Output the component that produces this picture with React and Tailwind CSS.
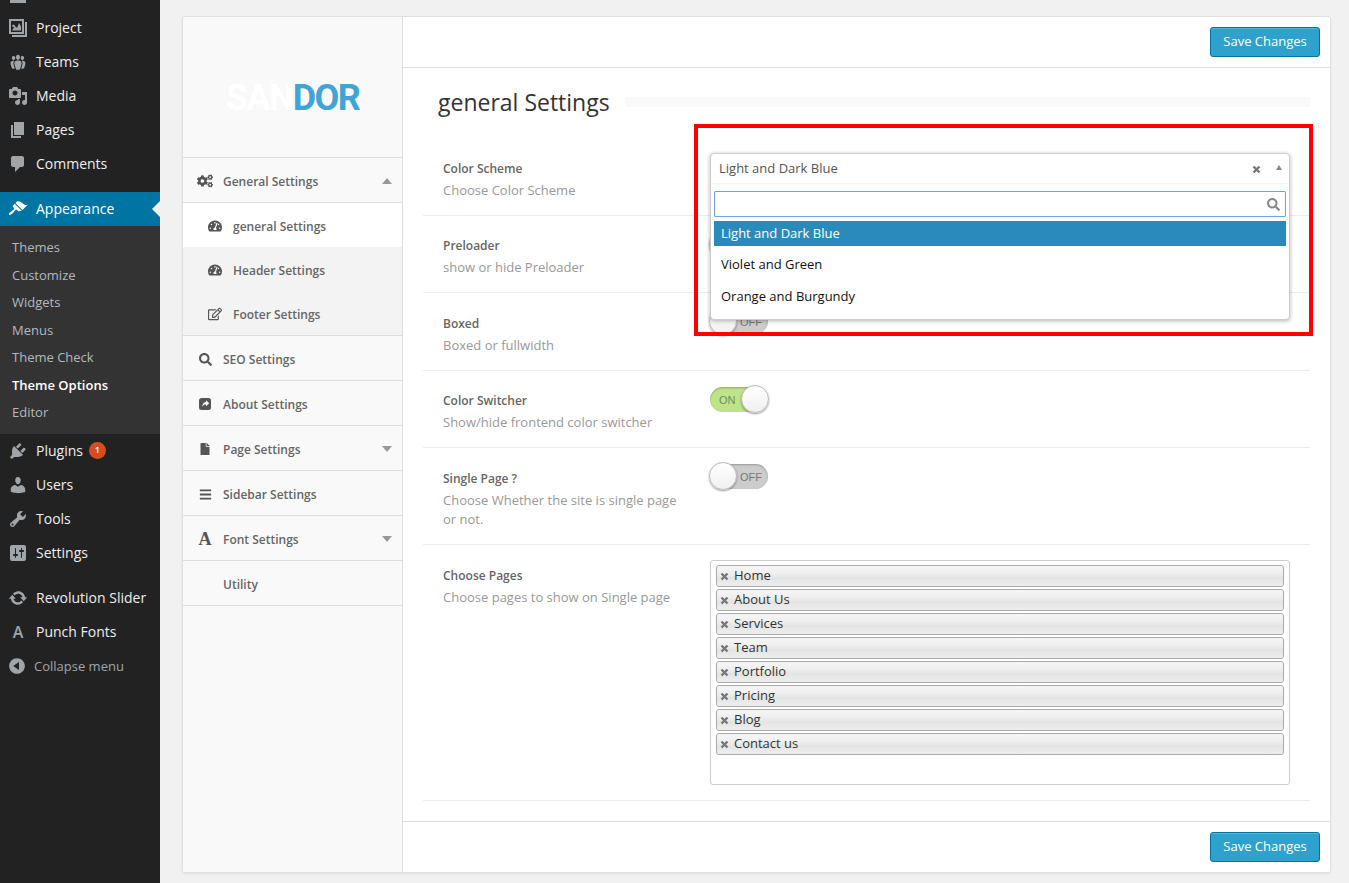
import React from 'react';
import { FaCogs, FaTachometerAlt, FaRegEdit, FaSearch, FaFile, FaBars } from 'react-icons/fa';

const D = {
  project: 'M1 1h15v15H1zM3 3v11h11V3zM4 12.500l3-4.500 2 2 2-5 2 3.500v4zM5.500 6.500a1.300 1.300 0 1 0 .01 0zM17 4h2v15H4v-2h13z',
  teams: 'M8.03 4.46c-.29 1.28.55 3.46 1.97 3.46 1.41 0 2.25-2.18 1.96-3.46-.22-.98-1.08-1.63-1.96-1.63-.89 0-1.74.65-1.97 1.63zm-4.13.9c-.25 1.08.47 2.93 1.67 2.93s1.92-1.85 1.67-2.93c-.19-.83-.92-1.39-1.67-1.39s-1.48.56-1.67 1.39zm8.86 0c-.25 1.08.47 2.93 1.66 2.93 1.2 0 1.92-1.85 1.67-2.93-.19-.83-.92-1.39-1.67-1.39-.74 0-1.47.56-1.66 1.39zm-.59 11.43l1.25-4.3C14.2 10 12.71 8.47 10 8.47c-2.72 0-4.21 1.53-3.44 4.02l1.26 4.3C8.05 17.51 9 18 10 18c.98 0 1.94-.49 2.17-1.21zm-6.1-7.63c-.49.67-.96 1.83-.42 3.59l1.12 3.79c-.34.2-.77.31-1.2.31-.85 0-1.65-.41-1.85-1.03l-1.07-3.65c-.65-2.11.61-3.4 2.92-3.4.27 0 .54.02.79.06-.1.1-.2.22-.29.33zm8.35-.39c2.31 0 3.58 1.29 2.92 3.4l-1.07 3.65c-.2.62-1 1.03-1.85 1.03-.43 0-.86-.11-1.2-.31l1.11-3.77c.55-1.78.08-2.94-.42-3.61-.08-.11-.18-.23-.28-.33.25-.04.51-.06.79-.06z',
  media: 'M13 11V4c0-.55-.45-1-1-1h-1.67L9 1H5L3.67 3H2c-.55 0-1 .45-1 1v7c0 .55.45 1 1 1h10c.55 0 1-.45 1-1zM7 4.500c1.380 0 2.500 1.120 2.500 2.500S8.380 9.500 7 9.500 4.500 8.380 4.500 7 5.620 4.500 7 4.500zM14 6h5v10.500c0 1.380-1.120 2.500-2.500 2.500S14 17.880 14 16.500s1.120-2.500 2.500-2.500c.17 0 .34.02.5.05V9h-3V6zm-4 8.050V13h2v3.500c0 1.380-1.120 2.500-2.500 2.500S7 17.880 7 16.500 8.120 14 9.500 14c.17 0 .34.02.5.05z',
  pages: 'M6 15V2h10v13H6zm-1 1h8v2H3V5h2v11z',
  comments: 'M5 2h9c1.100 0 2 .9 2 2v7c0 1.100-.9 2-2 2h-2l-5 5v-5H5c-1.100 0-2-.9-2-2V4c0-1.100.9-2 2-2z',
  appearance: 'M14.480 11.060L7.410 3.990l1.500-1.500c.5-.56 2.300-.47 3.510.32 1.210.8 1.430 1.280 2.910 2.100 1.180.64 2.450 1.260 4.450.85zm-.71.71L6.700 4.700 4.930 6.470c-.39.39-.39 1.020 0 1.410l1.060 1.060c.39.39.39 1.030 0 1.420-.6.6-1.430 1.110-2.210 1.690-.35.26-.7.53-1.010.84C1.430 13.230.4 14.890 1.200 15.680c.79.8 2.450-.23 3.790-1.570.31-.31.58-.66.84-1.010.58-.78 1.090-1.610 1.690-2.210.39-.39 1.030-.39 1.420 0l1.060 1.060c.39.39 1.020.39 1.410 0z',
  plugins: 'M13.110 4.360L9.870 7.600 8 5.730l3.240-3.240c.35-.34 1.050-.2 1.560.32.52.51.66 1.210.31 1.550zm-8 1.770l.91-1.120 9.010 9.010-1.190.84c-.71.71-2.630 1.160-3.820 1.160H6.140L4.900 17.260c-.59.59-1.540.59-2.120 0-.59-.58-.59-1.530 0-2.120l1.240-1.240v-3.880c0-1.130.4-3.190 1.090-3.890zm7.260 3.970l3.240-3.240c.34-.35 1.040-.21 1.550.31.52.51.66 1.210.31 1.550l-3.240 3.250z',
  users: 'M10 9.250c-2.270 0-2.730-3.440-2.730-3.440C7 4.020 7.820 2 9.970 2c2.160 0 2.980 2.020 2.710 3.810 0 0-.41 3.440-2.680 3.440zm0 2.570L12.720 10c2.390 0 4.520 2.330 4.520 4.530v2.490s-3.650 1.130-7.240 1.130c-3.650 0-7.240-1.130-7.240-1.130v-2.490c0-2.250 1.940-4.480 4.470-4.480z',
  tools: 'M16.680 9.770c-1.340 1.340-3.300 1.670-4.950.99l-5.410 6.520c-.99.99-2.590.99-3.580 0s-.99-2.590 0-3.570l6.520-5.420c-.68-1.650-.35-3.610.99-4.950 1.280-1.280 3.120-1.620 4.720-1.060l-2.890 2.890 2.820 2.820 2.860-2.870c.53 1.580.18 3.390-1.080 4.650zM3.810 16.210c.4.39 1.040.39 1.430 0 .4-.4.4-1.040 0-1.430-.39-.4-1.030-.4-1.430 0-.39.39-.39 1.030 0 1.430z',
  settings: 'M18 16V4c0-1.100-.9-2-2-2H4c-1.100 0-2 .9-2 2v12c0 1.100.9 2 2 2h12c1.100 0 2-.9 2-2zM8 11h1c.55 0 1 .45 1 1s-.45 1-1 1H8v1.500c0 .28-.22.5-.5.5s-.5-.22-.5-.5V13H6c-.55 0-1-.45-1-1s.45-1 1-1h1V5.500c0-.28.22-.5.5-.5s.5.22.5.5V11zm5-2h-1c-.55 0-1-.45-1-1s.45-1 1-1h1V5.500c0-.28.22-.5.5-.5s.5.22.5.5V7h1c.55 0 1 .45 1 1s-.45 1-1 1h-1v5.500c0 .28-.22.5-.5.5s-.5-.22-.5-.5V9z',
  update: 'M10.200 3.280c3.530 0 6.430 2.610 6.920 6h2.080l-3.500 4-3.500-4h2.320c-.45-1.970-2.210-3.450-4.320-3.450-1.450 0-2.730.71-3.540 1.780L4.950 5.660C6.230 4.200 8.110 3.280 10.200 3.280zm-.4 13.440c-3.520 0-6.430-2.610-6.920-6H.8l3.500-4c1.170 1.330 2.330 2.670 3.500 4H5.480c.45 1.970 2.210 3.450 4.320 3.450 1.450 0 2.730-.71 3.540-1.780l1.710 1.950c-1.280 1.460-3.150 2.380-5.250 2.380z',
  collapse: 'M10 2.160c4.330 0 7.840 3.510 7.840 7.840s-3.510 7.840-7.840 7.840S2.160 14.330 2.160 10 5.710 2.160 10 2.160zm2 11.720V6.120L6.180 9.970z',
};

function Dash({ d, className = 'text-[#a0a5aa]' }) {
  return (
    <svg viewBox="0 0 20 20" width="20" height="20" fill="currentColor" fillRule="evenodd" className={className}>
      <path d={d} />
    </svg>
  );
}

function XMark({ className = '' }) {
  return (
    <svg viewBox="0 0 9 9" width="9" height="9" className={className}>
      <path d="M1.500 1.500l6 6M7.500 1.500l-6 6" stroke="#777777" strokeWidth="2.400" fill="none" />
    </svg>
  );
}

function ShareIcon() {
  return (
    <svg viewBox="0 0 14 14" width="14" height="14">
      <rect x="1" y="1" width="12" height="12" rx="2.500" fill="#555555" />
      <path d="M8 3.200l3.200 3-3.200 3V7.500c-1.800 0-3 .6-3.800 2.300.1-2.700 1.400-4.600 3.800-4.800z" fill="#ffffff" />
    </svg>
  );
}

function MenuRow({ icon, children }) {
  return (
    <div className="flex h-[34px] items-center text-[14px] text-[#eeeeee]">
      <div className="flex w-9 justify-center">{icon}</div>
      <div className="flex items-center pb-[2px]">{children}</div>
    </div>
  );
}

const subs = ['Themes', 'Customize', 'Widgets', 'Menus', 'Theme Check', 'Theme Options', 'Editor'];

function WpSidebar() {
  return (
    <aside className="flex w-[160px] shrink-0 flex-col bg-[#222222]">
      <div className="h-[11px]">
        <div className="ml-[10px] h-[3px] w-[16px] bg-[#a0a5aa]" />
      </div>
      <MenuRow icon={<Dash d={D.project} />}>Project</MenuRow>
      <MenuRow icon={<Dash d={D.teams} />}>Teams</MenuRow>
      <MenuRow icon={<Dash d={D.media} />}>Media</MenuRow>
      <MenuRow icon={<Dash d={D.pages} />}>Pages</MenuRow>
      <MenuRow icon={<Dash d={D.comments} />}>Comments</MenuRow>
      <div className="relative mt-[11px] flex h-[34px] items-center bg-[#0074a2] text-[14px] text-white">
        <div className="flex w-9 justify-center"><Dash d={D.appearance} className="text-white" /></div>
        <div className="pb-[2px]">Appearance</div>
        <div className="absolute right-0 top-[9px] h-0 w-0 border-y-[8px] border-r-[8px] border-y-transparent border-r-[#f1f1f1]" />
      </div>
      <div className="h-[208px] bg-[#333333] pt-[8px] pl-3 text-[13px] text-[#b4b9be]">
        {subs.map((s) => (
          <div key={s} className={`flex h-[27.5px] items-center ${s === 'Theme Options' ? 'font-semibold text-white' : ''}`}>{s}</div>
        ))}
      </div>
      <MenuRow icon={<Dash d={D.plugins} />}>
        Plugins
        <span className="ml-[6px] flex h-[17px] w-[17px] items-center justify-center rounded-full bg-[#d54e21] text-[9px] font-semibold text-white">1</span>
      </MenuRow>
      <MenuRow icon={<Dash d={D.users} />}>Users</MenuRow>
      <MenuRow icon={<Dash d={D.tools} />}>Tools</MenuRow>
      <MenuRow icon={<Dash d={D.settings} />}>Settings</MenuRow>
      <div className="h-[11px]" />
      <MenuRow icon={<Dash d={D.update} />}>Revolution Slider</MenuRow>
      <MenuRow icon={<span className="text-[16px] font-semibold text-[#a0a5aa]">A</span>}>Punch Fonts</MenuRow>
      <div className="flex h-[34px] items-center text-[13px] text-[#a0a5aa]">
        <div className="flex w-[34px] justify-center"><Dash d={D.collapse} className="text-[#a0a5aa]" /></div>
        <div className="pt-[2px]">Collapse menu</div>
      </div>
    </aside>
  );
}

function NavRow({ icon, label, arrow, className = 'bg-[#f9f9f9] border-b border-[#dddddd] h-[45px]', sub }) {
  return (
    <div className={`flex items-center pt-[2px] text-[12px] font-semibold text-[#666666] ${className}`}>
      <div className={`flex items-center justify-center text-[#555555] ${sub ? 'ml-[24px] w-[16px]' : 'ml-[14px] w-[16px]'}`}>{icon}</div>
      <span className={`pt-[2px] ${sub ? 'ml-[10px]' : 'ml-[10px]'}`}>{label}</span>
      {arrow === 'up' && <div className="ml-auto mr-[10px] h-0 w-0 border-x-[5px] border-b-[6px] border-x-transparent border-b-[#999999]" />}
      {arrow === 'down' && <div className="ml-auto mr-[10px] h-0 w-0 border-x-[5px] border-t-[6px] border-x-transparent border-t-[#999999]" />}
    </div>
  );
}

function OptionNav() {
  return (
    <nav className="flex w-[220px] shrink-0 flex-col border-r border-[#dddddd] bg-[#f9f9f9]">
      <div className="flex h-[141px] items-start justify-center border-b border-[#dddddd] pt-[60px]">
        <div className="font-['Roboto',sans-serif] text-[36px] leading-[42px] font-bold tracking-[-1.600px]">
          <span className="text-white">SAN</span><span className="text-[#42a4d6]">DOR</span>
        </div>
      </div>
      <NavRow icon={<FaCogs size={16} />} label="General Settings" arrow="up" />
      <NavRow sub icon={<FaTachometerAlt size={14} />} label="general Settings" className="h-[44px] bg-white" />
      <NavRow sub icon={<FaTachometerAlt size={14} />} label="Header Settings" className="h-[44px] bg-[#f3f3f3]" />
      <NavRow sub icon={<FaRegEdit size={14} />} label="Footer Settings" className="h-[45px] border-b border-[#dddddd] bg-[#f3f3f3]" />
      <NavRow icon={<FaSearch size={13} />} label="SEO Settings" />
      <NavRow icon={<ShareIcon />} label="About Settings" />
      <NavRow icon={<FaFile size={12} />} label="Page Settings" arrow="down" />
      <NavRow icon={<FaBars size={13} />} label="Sidebar Settings" />
      <NavRow icon={<span className="font-['Liberation_Serif',serif] text-[18px] leading-[18px] font-bold">A</span>} label="Font Settings" arrow="down" />
      <NavRow icon={null} label="Utility" />
    </nav>
  );
}

function SaveButton() {
  return (
    <button className="h-[30px] w-[110px] rounded-[3px] border border-[#0074a2] bg-[#2ea2cc] text-[13px] text-white shadow-[inset_0_1px_0_rgba(120,200,230,0.5)]">
      Save Changes
    </button>
  );
}

function Toggle({ on }) {
  return (
    <div className={`relative h-[25px] w-[58px] rounded-full font-['Liberation_Sans',sans-serif] text-[11px] shadow-[inset_0_1px_2px_rgba(0,0,0,0.25)] ${on ? 'bg-[#bfe38a] text-[#6b8f5a]' : 'bg-[#cccccc] text-[#777777]'}`}>
      <span className={`absolute top-[5px] ${on ? 'left-[9px]' : 'left-[30px]'}`}>{on ? 'ON' : 'OFF'}</span>
      <div className={`absolute top-[-2px] h-[28px] w-[28px] rounded-full border border-[#bbbbbb] bg-gradient-to-b from-white to-[#f0f0f0] shadow-[0_1px_2px_rgba(0,0,0,0.4)] ${on ? 'left-[31px]' : 'left-[-1px]'}`} />
    </div>
  );
}

function Row({ label, desc, height, labelTop = 'pt-[20px]', children }) {
  return (
    <div className={`flex border-b border-[#eeeeee] ${height}`}>
      <div className="w-[287px] shrink-0 pl-[20px]">
        <div className={`${labelTop} text-[12px] leading-[20px] font-semibold text-[#666666]`}>{label}</div>
        <div className="mt-[2px] w-[240px] text-[13px] leading-[19px] text-[#999999]">{desc}</div>
      </div>
      <div className="pt-[16px]">{children}</div>
    </div>
  );
}

const pages = ['Home', 'About Us', 'Services', 'Team', 'Portfolio', 'Pricing', 'Blog', 'Contact us'];

function Tag({ label }) {
  return (
    <div className="flex h-[22px] items-center rounded-[3px] border border-[#aaaaaa] bg-[linear-gradient(#f4f4f4_10%,#eeeeee_40%,#e4e4e4_60%,#eeeeee_100%)] pl-[3px] text-[13px] text-[#333333]">
      <XMark />
      <span className="ml-[5px]">{label}</span>
    </div>
  );
}

function Dropdown() {
  return (
    <div className="absolute left-[307px] top-[136px] h-[167px] w-[580px] rounded-[4px] border border-[#cccccc] bg-white shadow-[0_1px_4px_rgba(0,0,0,0.3)]">
      <div className="flex h-[30px] items-center border-b border-[#f4f4f4] pl-2 text-[13px] text-[#555555]">
        Light and Dark Blue
        <XMark className="absolute left-[541px] top-[11px]" />
        <div className="absolute left-[565px] top-[11px] h-0 w-0 border-x-[3.500px] border-b-[5px] border-x-transparent border-b-[#888888]" />
      </div>
      <div className="relative mx-[3px] mt-[7px] h-[26px] rounded-[1px] border border-[#6aa7d9] bg-white">
        <FaSearch size={13} className="absolute right-[5px] top-[6px] text-[#888888]" />
      </div>
      <div className="mx-[3px] mt-[4px] text-[13px] text-[#111111]">
        <div className="flex h-[25px] items-center bg-[#2a8bba] pl-[7px] text-white">Light and Dark Blue</div>
        <div className="flex h-[32px] items-center pl-[7px] pt-[5px]">Violet and Green</div>
        <div className="flex h-[31px] items-center pl-[7px] pt-[7px]">Orange and Burgundy</div>
      </div>
    </div>
  );
}

function Content() {
  return (
    <div className="relative flex min-w-0 flex-1 flex-col bg-white">
      <div className="flex h-[51px] shrink-0 items-start justify-end border-b border-[#dddddd] pt-[10px] pr-[10px]">
        <SaveButton />
      </div>
      <div className="flex-1 pl-[20px] pr-[20px]">
        <div className="flex h-[71px] items-center pb-[3px] pl-[15px]">
          <h2 className="text-[23px] leading-[33px] text-[#333333]">general Settings</h2>
          <div className="ml-[15px] h-[10px] flex-1 bg-[#f9f9f9]" />
        </div>
        <Row label="Color Scheme" desc="Choose Color Scheme" height="h-[77px]"><div className="h-[31px]" /></Row>
        <Row label="Preloader" desc="show or hide Preloader" height="h-[77px]"><Toggle /></Row>
        <Row label="Boxed" labelTop="pt-[21px]" desc="Boxed or fullwidth" height="h-[78px]"><Toggle /></Row>
        <Row label="Color Switcher" desc="Show/hide frontend color switcher" height="h-[77px]"><Toggle on /></Row>
        <Row label="Single Page ?" labelTop="pt-[21px]" desc="Choose Whether the site is single page or not." height="h-[97px]"><Toggle /></Row>
        <div className="flex h-[256px] border-b border-[#eeeeee]">
          <div className="w-[287px] shrink-0 pl-[20px]">
            <div className="pt-[21px] text-[12px] leading-[20px] font-semibold text-[#666666]">Choose Pages</div>
            <div className="mt-[2px] text-[13px] leading-[19px] text-[#999999]">Choose pages to show on Single page</div>
          </div>
          <div className="pt-[15px]">
            <div className="flex h-[225px] w-[580px] flex-col gap-[2px] rounded-[3px] border border-[#cccccc] bg-white px-[5px] pt-[4px]">
              {pages.map((p) => <Tag key={p} label={p} />)}
            </div>
          </div>
        </div>
      </div>
      <div className="flex h-[51px] shrink-0 items-start justify-end border-t border-[#dddddd] pt-[10px] pr-[10px]">
        <SaveButton />
      </div>
      <Dropdown />
      <div className="pointer-events-none absolute left-[291px] top-[107px] h-[212px] w-[619px] border-[4px] border-[#ff0000]" />
    </div>
  );
}

export default function App() {
  return (
    <div className="flex h-[883px] w-[1349px] overflow-hidden bg-[#f1f1f1] font-['Open_Sans',sans-serif]">
      <WpSidebar />
      <main className="flex-1 pl-[22px] pr-[18px] pt-[16px]">
        <div className="flex h-[857px] overflow-hidden rounded-[3px] border border-[#e0e0e0] shadow-[0_1px_2px_rgba(0,0,0,0.08)]">
          <OptionNav />
          <Content />
        </div>
      </main>
    </div>
  );
}
